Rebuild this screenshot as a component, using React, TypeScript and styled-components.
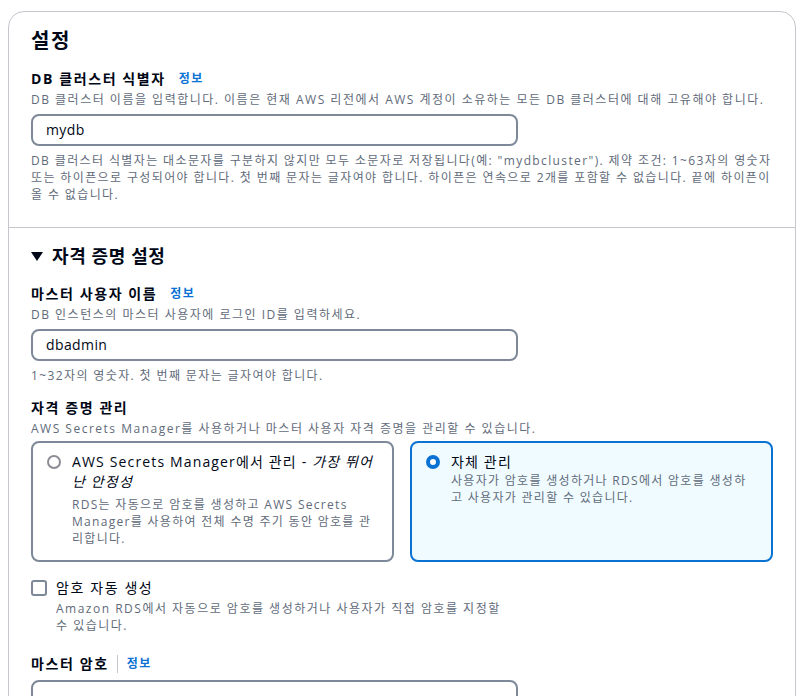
import React from "react";
import styled, { createGlobalStyle } from "styled-components";

const Global = createGlobalStyle`
  html, body { margin: 0; padding: 0; background: #ffffff; }
  body {
    font-family: "Open Sans", "Noto Sans CJK KR", sans-serif;
    color: #000716;
    -webkit-font-smoothing: antialiased;
  }
  * { box-sizing: border-box; }
`;

const Page = styled.div`
  padding: 11px 12px 0 8px;
`;

const Card = styled.div`
  border: 1px solid #c6c6cd;
  border-radius: 16px;
  background: #fff;
  overflow: hidden;
  height: 720px;
`;

const Section = styled.section<{ $top: number; $bottom: number }>`
  padding: ${(p) => p.$top}px 22px ${(p) => p.$bottom}px 22px;
  display: flex;
  flex-direction: column;
  & + & {
    border-top: 1px solid #c6c6cd;
  }
`;

const Title = styled.h2`
  margin: 0;
  font-size: 20px;
  line-height: 28px;
  font-weight: 700;
  letter-spacing: 1.5px;
`;

const ExpandTitle = styled.h2`
  margin: 0;
  font-size: 18px;
  line-height: 24px;
  font-weight: 700;
  letter-spacing: 0.6px;
  display: flex;
  align-items: center;
  gap: 9px;
`;

const Caret = styled.span`
  display: inline-block;
  width: 0;
  height: 0;
  border-left: 6px solid transparent;
  border-right: 6px solid transparent;
  border-top: 9px solid #000716;
  margin-top: 1px;
`;

const Field = styled.div<{ $mt: number }>`
  margin-top: ${(p) => p.$mt}px;
  display: flex;
  flex-direction: column;
`;

const Label = styled.div`
  font-size: 14px;
  line-height: 20px;
  font-weight: 700;
  letter-spacing: 1.6px;
  display: flex;
  align-items: center;
`;

const Info = styled.a<{ $divider?: boolean }>`
  font-size: 12px;
  font-weight: 700;
  color: #0972d3;
  text-decoration: none;
  letter-spacing: 1.5px;
  margin-left: ${(p) => (p.$divider ? 8 : 13)}px;
  padding-left: ${(p) => (p.$divider ? 9 : 0)}px;
  border-left: ${(p) => (p.$divider ? "1px solid #c6c6cd" : "none")};
  line-height: 18px;
`;

const Desc = styled.div`
  font-size: 12px;
  line-height: 17px;
  letter-spacing: 1.5px;
  color: #5f6b7a;
  margin-top: 2px;
`;

const Input = styled.div`
  margin-top: 6px;
  width: 487px;
  height: 32px;
  border: 2px solid #7d8998;
  border-radius: 8px;
  padding: 0 13px;
  font-size: 14px;
  line-height: 28px;
  letter-spacing: 0.4px;
  color: #000716;
`;

const Help = styled.div`
  margin-top: 6px;
  font-size: 12px;
  line-height: 17px;
  letter-spacing: 1.38px;
  color: #5f6b7a;
`;

const Tiles = styled.div`
  margin-top: 4px;
  display: grid;
  grid-template-columns: 1fr 1fr;
  gap: 16px;
`;

const Tile = styled.div<{ $selected?: boolean }>`
  height: 121px;
  border: 2px solid ${(p) => (p.$selected ? "#0972d3" : "#7d8998")};
  background: ${(p) => (p.$selected ? "#f0fbff" : "#fff")};
  border-radius: 8px;
  padding: 9px 14px 0 14px;
  display: flex;
  gap: 11px;
  align-items: flex-start;
`;

const Radio = styled.span<{ $checked?: boolean }>`
  flex: none;
  width: 14px;
  height: 14px;
  margin-top: 3px;
  border-radius: 50%;
  border: ${(p) => (p.$checked ? "4px solid #0972d3" : "2px solid #8c8c94")};
  background: #fff;
`;

const TileBody = styled.div`
  display: flex;
  flex-direction: column;
  padding-right: 4px;
`;

const TileTitle = styled.div`
  font-size: 14px;
  line-height: 20px;
  letter-spacing: 1.15px;
  color: #000716;
  & em { font-style: italic; }
`;

const TileDesc = styled.div<{ $gap: number }>`
  margin-top: ${(p) => p.$gap}px;
  font-size: 12px;
  line-height: 17px;
  letter-spacing: 1.3px;
  color: #5f6b7a;
`;

const CheckRow = styled.div`
  margin-top: 16px;
  display: flex;
  gap: 9px;
  align-items: flex-start;
`;

const Box = styled.span`
  flex: none;
  width: 16px;
  height: 16px;
  margin-top: 2px;
  border: 2px solid #7d8998;
  border-radius: 3px;
`;

const CheckBody = styled.div`
  display: flex;
  flex-direction: column;
  max-width: 460px;
`;

const CheckLabel = styled.div`
  font-size: 14px;
  line-height: 20px;
  letter-spacing: 1.6px;
`;

export default function App() {
  return (
    <>
      <Global />
      <Page>
        <Card>
          <Section $top={15} $bottom={24}>
            <Title>설정</Title>
            <Field $mt={14}>
              <Label>
                DB 클러스터 식별자<Info>정보</Info>
              </Label>
              <Desc>
                DB 클러스터 이름을 입력합니다. 이름은 현재 AWS 리전에서 AWS 계정이 소유하는 모든 DB 클러스터에 대해 고유해야 합니다.
              </Desc>
              <Input>mydb</Input>
              <Help>
                DB 클러스터 식별자는 대소문자를 구분하지 않지만 모두 소문자로 저장됩니다(예: "mydbcluster"). 제약 조건: 1~63자의 영숫자 또는 하이픈으로 구성되어야 합니다. 첫 번째 문자는 글자여야 합니다. 하이픈은 연속으로 2개를 포함할 수 없습니다. 끝에 하이픈이 올 수 없습니다.
              </Help>
            </Field>
          </Section>
          <Section $top={16} $bottom={0}>
            <ExpandTitle>
              <Caret />
              자격 증명 설정
            </ExpandTitle>
            <Field $mt={16}>
              <Label>
                마스터 사용자 이름<Info>정보</Info>
              </Label>
              <Desc>DB 인스턴스의 마스터 사용자에 로그인 ID를 입력하세요.</Desc>
              <Input>dbadmin</Input>
              <Help>1~32자의 영숫자. 첫 번째 문자는 글자여야 합니다.</Help>
            </Field>
            <Field $mt={14}>
              <Label>자격 증명 관리</Label>
              <Desc>AWS Secrets Manager를 사용하거나 마스터 사용자 자격 증명을 관리할 수 있습니다.</Desc>
              <Tiles>
                <Tile>
                  <Radio />
                  <TileBody>
                    <TileTitle>
                      AWS Secrets Manager에서 관리 - <em>가장 뛰어난 안정성</em>
                    </TileTitle>
                    <TileDesc $gap={4}>
                      RDS는 자동으로 암호를 생성하고 AWS Secrets Manager를 사용하여 전체 수명 주기 동안 암호를 관리합니다.
                    </TileDesc>
                  </TileBody>
                </Tile>
                <Tile $selected>
                  <Radio $checked />
                  <TileBody>
                    <TileTitle>자체 관리</TileTitle>
                    <TileDesc $gap={0}>
                      사용자가 암호를 생성하거나 RDS에서 암호를 생성하고 사용자가 관리할 수 있습니다.
                    </TileDesc>
                  </TileBody>
                </Tile>
              </Tiles>
              <CheckRow>
                <Box />
                <CheckBody>
                  <CheckLabel>암호 자동 생성</CheckLabel>
                  <Desc>
                    Amazon RDS에서 자동으로 암호를 생성하거나 사용자가 직접 암호를 지정할 수 있습니다.
                  </Desc>
                </CheckBody>
              </CheckRow>
            </Field>
            <Field $mt={20}>
              <Label>
                마스터 암호<Info $divider>정보</Info>
              </Label>
              <Input />
            </Field>
          </Section>
        </Card>
      </Page>
    </>
  );
}
